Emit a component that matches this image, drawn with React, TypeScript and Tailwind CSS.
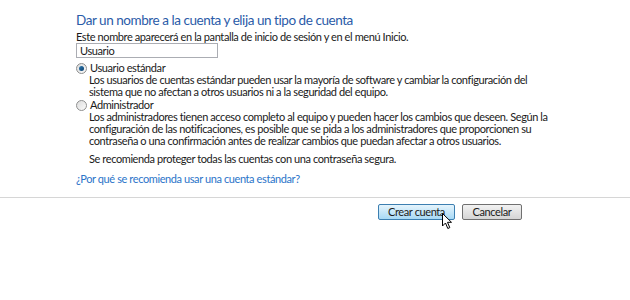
import React from "react";

function Radio({ checked }: { checked: boolean }) {
  return (
    <span className="relative inline-block w-[11px] h-[11px] rounded-full border border-[#8e8f8f] bg-gradient-to-br from-[#dcdcdc] to-[#fbfbfb] mr-[3px] shrink-0">
      {checked && (
        <span className="absolute left-[2px] top-[2px] w-[5px] h-[5px] rounded-full bg-gradient-to-br from-[#2f7ab0] to-[#0b3f6e]" />
      )}
    </span>
  );
}

export default function App() {
  return (
    <div
      className="w-[630px] h-[300px] bg-white text-[11px] leading-[12px] tracking-[-0.4px] text-[#1a1a1a]"
      style={{ fontFamily: 'Lato, "Open Sans", sans-serif' }}
    >
      <div className="pl-[76px] pt-[11px]">
        <h1 className="text-[13.5px] leading-[18px] tracking-[-0.45px] text-[#2a5ba8]">
          Dar un nombre a la cuenta y elija un tipo de cuenta
        </h1>
        <p className="mt-[2px]">
          Este nombre aparecerá en la pantalla de inicio de sesión y en el menú Inicio.
        </p>
        <div className="w-[142px] h-[15px] border border-[#abadb3] px-[3px] leading-[13px]">
          Usuario
        </div>

        <div className="mt-[4px] flex items-center">
          <Radio checked />
          <span>Usuario estándar</span>
        </div>
        <div className="pl-[13px] mt-[0px]">
          <p>
            Los usuarios de cuentas estándar pueden usar la mayoría de software y cambiar la configuración del
          </p>
          <p>sistema que no afectan a otros usuarios ni a la seguridad del equipo.</p>
        </div>

        <div className="mt-[1px] flex items-center">
          <Radio checked={false} />
          <span>Administrador</span>
        </div>
        <div className="pl-[13px] mt-[0px]">
          <p>
            Los administradores tienen acceso completo al equipo y pueden hacer los cambios que deseen. Según la
          </p>
          <p>
            configuración de las notificaciones, es posible que se pida a los administradores que proporcionen su
          </p>
          <p>
            contraseña o una confirmación antes de realizar cambios que puedan afectar a otros usuarios.
          </p>
          <p className="mt-[6px]">Se recomienda proteger todas las cuentas con una contraseña segura.</p>
        </div>

        <p className="mt-[8px] text-[#2b74c9]">¿Por qué se recomienda usar una cuenta estándar?</p>
      </div>

      <div className="mt-[12px] border-t border-[#d6d6d6]" />

      <div className="flex justify-end gap-[7px] pr-[108px] pt-[6px]">
        <div className="relative">
          <button className="w-[77px] h-[16px] rounded-[2px] border border-[#3c7fb1] bg-gradient-to-b from-[#e5f4fc] to-[#a7d9f5] text-[11px] leading-[14px] text-[#1a1a1a]">
            Crear cuenta
          </button>
          <svg className="absolute left-[64px] top-[9px]" width="11" height="17" viewBox="0 0 11 17">
            <path d="M0.5 0.5 L0.5 13 L3.5 10 L5.8 15.5 L7.8 14.6 L5.5 9.3 L9.5 9.3 Z" fill="#fff" stroke="#000" strokeWidth="1" strokeLinejoin="round" />
          </svg>
        </div>
        <button className="w-[60px] h-[16px] rounded-[2px] border border-[#707070] bg-gradient-to-b from-[#f2f2f2] to-[#d5d5d5] text-[11px] leading-[14px] text-[#1a1a1a]">
          Cancelar
        </button>
      </div>
    </div>
  );
}
